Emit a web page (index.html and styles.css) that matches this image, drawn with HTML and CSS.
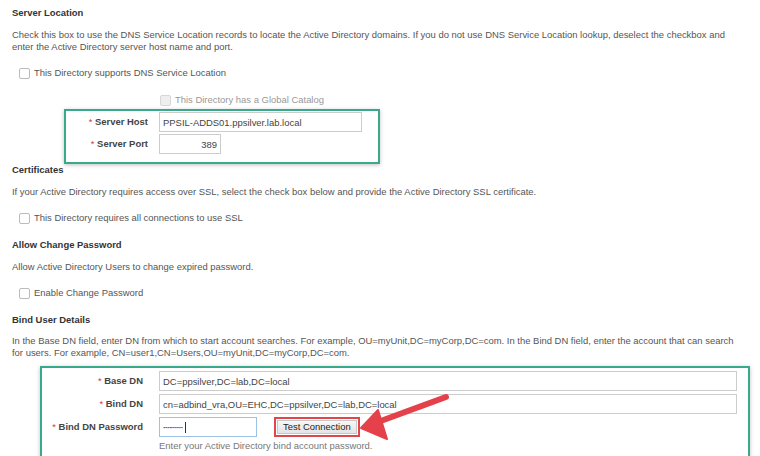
FILE: index.html
```html
<!DOCTYPE html>
<html lang="en">
<head>
    <meta charset="UTF-8">
    <meta name="viewport" content="width=device-width, initial-scale=1.0">
    <title>Active Directory Settings</title>
    <link rel="stylesheet" href="styles.css">
</head>
<body>
    <div class="page">
        <div class="heading">Server Location</div>
        <div class="desc">Check this box to use the DNS Service Location records to locate the Active Directory domains. If you do not use DNS Service Location lookup, deselect the checkbox and enter the Active Directory server host name and port.</div>
        <label class="check"><span class="box"></span>This Directory supports DNS Service Location</label>
        <label class="check sub disabled"><span class="box"></span>This Directory has a Global Catalog</label>

        <div class="panel host-panel">
            <div class="row">
                <div class="label"><span class="req">*</span> Server Host</div>
                <input class="field host" type="text" value="PPSIL-ADDS01.ppsilver.lab.local">
            </div>
            <div class="row">
                <div class="label"><span class="req">*</span> Server Port</div>
                <input class="field port" type="text" value="389">
            </div>
        </div>

        <div class="heading">Certificates</div>
        <div class="desc">If your Active Directory requires access over SSL, select the check box below and provide the Active Directory SSL certificate.</div>
        <label class="check"><span class="box"></span>This Directory requires all connections to use SSL</label>

        <div class="heading">Allow Change Password</div>
        <div class="desc">Allow Active Directory Users to change expired password.</div>
        <label class="check"><span class="box"></span>Enable Change Password</label>

        <div class="heading last">Bind User Details</div>
        <div class="desc tight">In the Base DN field, enter DN from which to start account searches. For example, OU=myUnit,DC=myCorp,DC=com. In the Bind DN field, enter the account that can search for users. For example, CN=user1,CN=Users,OU=myUnit,DC=myCorp,DC=com.</div>

        <div class="panel bind-panel">
            <div class="row">
                <div class="label"><span class="req">*</span> Base DN</div>
                <input class="field wide" type="text" value="DC=ppsilver,DC=lab,DC=local">
            </div>
            <div class="row">
                <div class="label"><span class="req">*</span> Bind DN</div>
                <input class="field wide" type="text" value="cn=adbind_vra,OU=EHC,DC=ppsilver,DC=lab,DC=local">
            </div>
            <div class="row">
                <div class="label"><span class="req">*</span> Bind DN Password</div>
                <div class="pw-line">
                    <div class="field pw"><span class="dots">··········</span><span class="caret"></span></div>
                    <span class="highlight"><button class="test-btn">Test Connection</button></span>
                </div>
            </div>
            <div class="row">
                <div></div>
                <div class="help">Enter your Active Directory bind account password.</div>
            </div>
        </div>
    </div>

    <svg class="arrow" width="760" height="456" viewBox="0 0 760 456">
        <line x1="446" y1="397" x2="378" y2="422" stroke="#e5414a" stroke-width="6" stroke-linecap="round"/>
        <polygon points="361,428 378,410 387,439" fill="#e5414a" stroke="#e5414a" stroke-width="2" stroke-linejoin="round"/>
    </svg>
</body>
</html>
```

FILE: styles.css
```css
body {
    margin: 0;
    background: #fff;
    font-family: "Liberation Sans", Arial, sans-serif;
    font-size: 9.45px;
    color: #555;
    position: relative;
    overflow: hidden;
}
.page {
    padding: 7px 8px 0 12px;
}
.heading {
    font-weight: bold;
    color: #333;
    line-height: 12px;
    margin-bottom: 10px;
}
.heading.last {
    margin-bottom: 9px;
}
.desc {
    line-height: 12px;
    margin-bottom: 14px;
    padding-right: 8px;
}
.desc.tight {
    margin-bottom: 7px;
}
.check {
    display: flex;
    align-items: center;
    line-height: 12px;
    margin: 0 0 15px 7px;
}
.check .box {
    width: 9px;
    height: 9px;
    border: 1px solid #bbb;
    border-radius: 2px;
    background: #fff;
    margin-right: 4px;
}
.check.sub {
    margin-left: 148px;
    margin-bottom: 3px;
}
.check.disabled {
    color: #999;
}
.check.disabled .box {
    background: #eee;
    border-color: #d6d6d6;
}
.panel {
    border: 2px solid #38a98b;
    box-shadow: 0 1px 4px rgba(0, 0, 0, 0.25);
    display: grid;
    row-gap: 2px;
}
.host-panel {
    width: 312px;
    margin-left: 52px;
    grid-template-columns: 82px 1fr;
    column-gap: 11px;
    padding: 1px 0 8px;
}
.bind-panel {
    width: 695px;
    margin-left: 28px;
    grid-template-columns: 101px 1fr;
    column-gap: 16px;
    padding: 3px 11px 4px 0;
    row-gap: 3px;
}
.row {
    display: contents;
}
.label {
    text-align: right;
    font-weight: bold;
    color: #444;
    line-height: 20px;
}
.req {
    color: #d9333f;
    font-weight: normal;
}
.field {
    box-sizing: border-box;
    height: 20px;
    border: 1px solid #ccc;
    padding: 0 3px;
    font-family: inherit;
    font-size: 9.45px;
    color: #444;
    background: #fff;
    outline: none;
}
.host {
    width: 203px;
}
.port {
    width: 62px;
    text-align: right;
}
.wide {
    width: 100%;
}
.pw-line {
    display: flex;
    align-items: center;
}
.pw {
    width: 98px;
    border-color: #9cc3e4;
    display: flex;
    align-items: center;
}
.dots {
    font-size: 8px;
    letter-spacing: -0.7px;
    font-weight: bold;
    color: #333;
}
.caret {
    width: 1px;
    height: 11px;
    background: #333;
    margin-left: 2px;
}
.highlight {
    margin-left: 17px;
    border: 2px solid #e0474c;
    padding: 1px;
    display: flex;
}
.test-btn {
    font-family: inherit;
    font-size: 9.45px;
    color: #222;
    background: linear-gradient(#f7f7f7, #e4e4e4);
    border: 1px solid #c8c8c8;
    padding: 1px 5px;
    height: 14px;
    line-height: 10px;
}
.help {
    color: #777;
    line-height: 12px;
}
.arrow {
    position: absolute;
    top: 0;
    left: 0;
    pointer-events: none;
}
```
